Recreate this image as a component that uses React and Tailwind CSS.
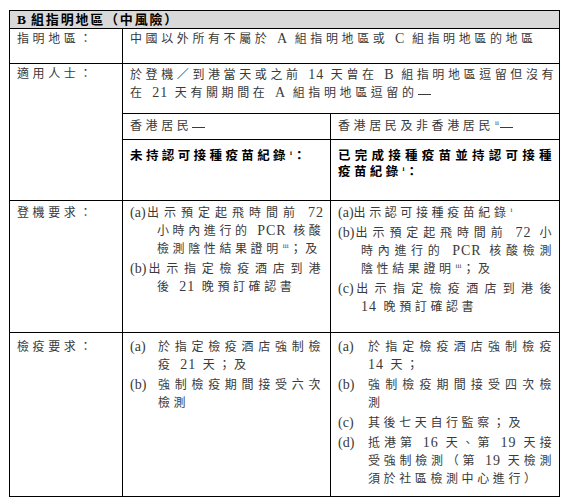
import React from "react";

const Sup = ({ t }) => (
  <span className="relative top-[-5px] text-[7px] tracking-normal mx-[1px]">{t}</span>
);

const J = ({ children, className = "" }) => (
  <div className={"text-justify [text-align-last:justify] whitespace-nowrap " + className}>{children}</div>
);
const L = ({ children, className = "" }) => (
  <div className={"whitespace-nowrap " + className}>{children}</div>
);
const M = ({ t }) => <span className="text-[14px] tracking-normal">{t}</span>;
const N = ({ children }) => <span className="text-[14px] tracking-[1px]">{children}</span>;
const D = () => <span className="inline-block w-[13px] h-px bg-current align-middle" />;

export default function App() {
  return (
    <div className="w-[568px] h-[504px] bg-white pt-[10px] pl-[9px] font-['Liberation_Serif','Noto_Sans_CJK_TC',serif] text-[12px] leading-[18px] tracking-[3.6px] text-[#3a3a3a]">
      <div className="grid w-[551px] grid-cols-[113px_208px_228px] grid-rows-[18px_35px_50px_26px_61px_132px_163px] border border-black">
        {/* header */}
        <div className="col-span-3 border-b border-black bg-[#d9d9d9] pl-[7px] text-[13px] leading-[17px] font-bold tracking-[1.8px] text-black">
          <span className="text-[13.5px] tracking-normal">B</span> 組指明地區（中風險）
        </div>

        {/* row 1 */}
        <div className="border-r border-b border-black pl-[7px] pt-[1px]">指明地區：</div>
        <div className="col-span-2 border-b border-black pl-[7px] pt-[1px]">
          <L>中國以外所有不屬於 <N>A</N> 組指明地區或 <N>C</N> 組指明地區的地區</L>
        </div>

        {/* row 2 */}
        <div className="row-span-3 border-r border-b border-black pl-[7px] pt-[1px]">適用人士：</div>
        <div className="col-span-2 border-b border-black pl-[7px] pr-[8px] pt-[2px]">
          <J>於登機／到港當天或之前 <N>14</N> 天曾在 <N>B</N> 組指明地區逗留但沒有</J>
          <L>在 <N>21</N> 天有關期間在 <N>A</N> 組指明地區逗留的<D /></L>
        </div>
        <div className="border-r border-b border-black pl-[7px] pt-[3px]">香港居民<D /></div>
        <div className="border-b border-black pl-[7px] pt-[3px]">
          香港居民及非香港居民<Sup t="ii" /><D />
        </div>
        <div className="border-r border-b border-black pl-[7px] pt-[8px] text-[12.5px] leading-[16px] font-bold tracking-[3.4px] text-black">
          未持認可接種疫苗紀錄<Sup t="i" />：
        </div>
        <div className="border-b border-black pl-[7px] pr-[4px] pt-[8px] text-[12.5px] leading-[16px] font-bold tracking-[3.4px] text-black">
          <J>已完成接種疫苗並持認可接種</J>
          <L>疫苗紀錄<Sup t="i" />：</L>
        </div>

        {/* row 3 */}
        <div className="border-r border-b border-black pl-[7px] pt-[3px]">登機要求：</div>
        <div className="border-r border-b border-black pl-[7px] pr-[6px] pt-[3px]">
          <J><M t="(a)" />出示預定起飛時間前 <N>72</N></J>
          <J className="pl-[27px]">小時內進行的 <N>PCR</N> 核酸</J>
          <L className="pl-[27px]">檢測陰性結果證明<Sup t="iii" />；及</L>
          <J><M t="(b)" />出示指定檢疫酒店到港</J>
          <L className="pl-[27px]">後 <N>21</N> 晚預訂確認書</L>
        </div>
        <div className="border-b border-black pl-[7px] pr-[4px] pt-[3px]">
          <L><M t="(a)" />出示認可接種疫苗紀錄<Sup t="i" /></L>
          <J><M t="(b)" />出示預定起飛時間前 <N>72</N> 小</J>
          <J className="pl-[23px]">時內進行的 <N>PCR</N> 核酸檢測</J>
          <L className="pl-[23px]">陰性結果證明<Sup t="iii" />；及</L>
          <J><M t="(c)" />出示指定檢疫酒店到港後</J>
          <L className="pl-[23px]"><N>14</N> 晚預訂確認書</L>
        </div>

        {/* row 4 */}
        <div className="border-r border-black pl-[7px] pt-[5px]">檢疫要求：</div>
        <div className="border-r border-black pl-[7px] pr-[6px] pt-[5px] flex flex-col gap-[2px]">
          <div className="flex">
            <span className="w-[28px] shrink-0 text-[14px] tracking-normal">(a)</span>
            <div className="flex-1">
              <J>於指定檢疫酒店強制檢</J>
              <L>疫 <N>21</N> 天；及</L>
            </div>
          </div>
          <div className="flex">
            <span className="w-[28px] shrink-0 text-[14px] tracking-normal">(b)</span>
            <div className="flex-1">
              <J>強制檢疫期間接受六次</J>
              <L>檢測</L>
            </div>
          </div>
        </div>
        <div className="pl-[7px] pr-[4px] pt-[5px] flex flex-col gap-[2px]">
          <div className="flex">
            <span className="w-[30px] shrink-0 text-[14px] tracking-normal">(a)</span>
            <div className="flex-1">
              <J>於指定檢疫酒店強制檢疫</J>
              <L><N>14</N> 天；</L>
            </div>
          </div>
          <div className="flex">
            <span className="w-[30px] shrink-0 text-[14px] tracking-normal">(b)</span>
            <div className="flex-1">
              <J>強制檢疫期間接受四次檢</J>
              <L>測</L>
            </div>
          </div>
          <div className="flex">
            <span className="w-[30px] shrink-0 text-[14px] tracking-normal">(c)</span>
            <div className="flex-1">
              <L>其後七天自行監察；及</L>
            </div>
          </div>
          <div className="flex">
            <span className="w-[30px] shrink-0 text-[14px] tracking-normal">(d)</span>
            <div className="flex-1">
              <J>抵港第 <N>16</N> 天、第 <N>19</N> 天接</J>
              <J>受強制檢測（第 <N>19</N> 天檢測</J>
              <L>須於社區檢測中心進行）</L>
            </div>
          </div>
        </div>
      </div>
    </div>
  );
}
